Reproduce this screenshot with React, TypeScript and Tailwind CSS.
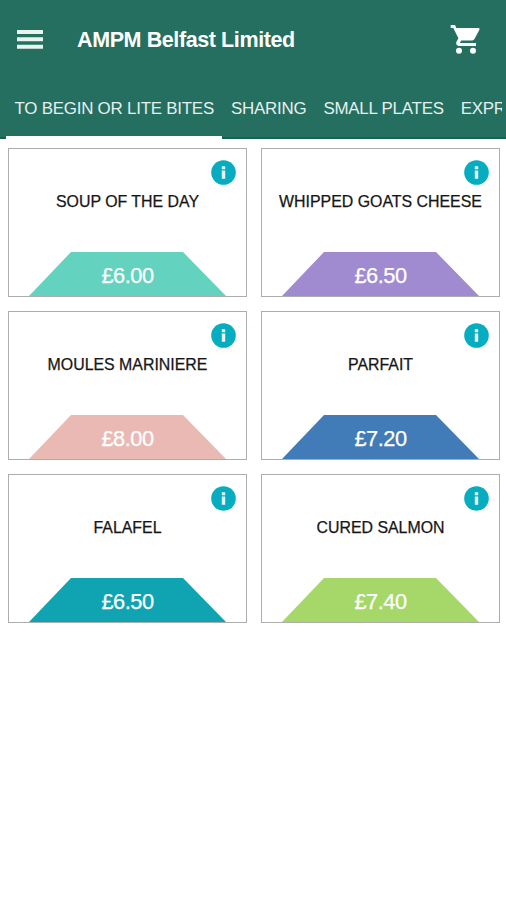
import clsx from 'clsx';

type MenuItem = {
  name: string;
  price: string;
  fill: string;
};

const TABS = ['TO BEGIN OR LITE BITES', 'SHARING', 'SMALL PLATES', 'EXPR'];

const ITEMS: MenuItem[] = [
  { name: 'SOUP OF THE DAY', price: '£6.00', fill: 'fill-[#63d3c0]' },
  { name: 'WHIPPED GOATS CHEESE', price: '£6.50', fill: 'fill-[#a08bd0]' },
  { name: 'MOULES MARINIERE', price: '£8.00', fill: 'fill-[#ebb9b4]' },
  { name: 'PARFAIT', price: '£7.20', fill: 'fill-[#417bb8]' },
  { name: 'FALAFEL', price: '£6.50', fill: 'fill-[#10a3b1]' },
  { name: 'CURED SALMON', price: '£7.40', fill: 'fill-[#a5d868]' },
];

export default function App() {
  return (
    <div className="h-[900px] w-[506px] overflow-hidden bg-white font-['Liberation_Sans',Arial,sans-serif]">
      <header className="flex h-[139px] flex-col border-b-2 border-[#16614f] bg-[#246f60] text-white">
        <div className="flex h-[79px] items-center pr-[26px] pl-[17px]">
          <button type="button" aria-label="Menu">
            <MenuIcon />
          </button>
          <h1 className="ml-[34px] flex-1 text-[21.5px] leading-6 font-bold tracking-[-0.4px] whitespace-nowrap">
            AMPM Belfast Limited
          </h1>
          <button type="button" aria-label="Basket">
            <CartIcon />
          </button>
        </div>
        <TabBar />
      </header>

      <main className="grid grid-cols-[239px_239px] gap-x-[14px] gap-y-[14px] pt-[9px] pl-[8px]">
        {ITEMS.map((item) => (
          <ItemCard key={item.name} item={item} />
        ))}
      </main>
    </div>
  );
}

function TabBar() {
  return (
    <nav className="-mb-0.5 ml-[6px] flex h-[60px] w-[496px] overflow-hidden">
      {TABS.map((tab, i) => (
        <button
          key={tab}
          type="button"
          className={clsx(
            'shrink-0 border-b-[3px] px-[8.5px] pt-[3px] text-[16.9px] tracking-[-0.22px] whitespace-nowrap text-[#e6f0ee]',
            i === 0 ? 'border-white' : 'border-transparent',
          )}
        >
          {tab}
        </button>
      ))}
    </nav>
  );
}

function ItemCard({ item }: { item: MenuItem }) {
  return (
    <article className="relative flex h-[149px] flex-col justify-between border border-[#adadad] bg-white">
      <InfoIcon />
      <h2 className="pt-[43px] text-center text-[15.9px] leading-5 whitespace-nowrap text-[#161616] [-webkit-text-stroke:0.25px_#161616]">
        {item.name}
      </h2>
      <div className="relative mx-auto flex h-[44px] w-[197px] items-center justify-center">
        <svg viewBox="0 0 197 44" className={clsx('absolute inset-0 h-full w-full', item.fill)}>
          <path d="M42 0h112l43 44H0z" />
        </svg>
        <span className="relative pt-[3px] text-[21.8px] leading-6 tracking-[-0.5px] text-white [-webkit-text-stroke:0.25px_#fff]">
          {item.price}
        </span>
      </div>
    </article>
  );
}

function MenuIcon() {
  return (
    <svg viewBox="0 0 26 19" className="h-[19px] w-[26px] fill-[#e9f3f0]">
      <path d="M0 0h26v4H0zM0 7.3h26v4H0zM0 14.7h26v4H0z" />
    </svg>
  );
}

function CartIcon() {
  return (
    <svg viewBox="0 0 30 30" className="h-[30px] w-[30px] fill-white">
      <path d="M.7 0H5l1.4 2.9h21.9c1.1 0 1.6.9 1.1 1.8L24.5 14c-.5.9-1.4 1.4-2.4 1.4H11.2L9.8 18H26v3H9c-2.2 0-3.5-2.3-2.5-4.2l1.9-3.6L3.3 3H.7z" />
      <circle cx="9" cy="25.8" r="3" />
      <circle cx="23" cy="25.8" r="3" />
    </svg>
  );
}

function InfoIcon() {
  return (
    <svg viewBox="0 0 25 25" className="absolute top-[10.5px] right-[10px] h-[25px] w-[25px]">
      <circle cx="12.5" cy="12.5" r="12.3" className="fill-[#06adc0]" />
      <path d="M10.8 6.3h3.4v3h-3.4zM10.8 10.6h3.4v8.2h-3.4z" className="fill-[#e8f8fa]" />
    </svg>
  );
}
